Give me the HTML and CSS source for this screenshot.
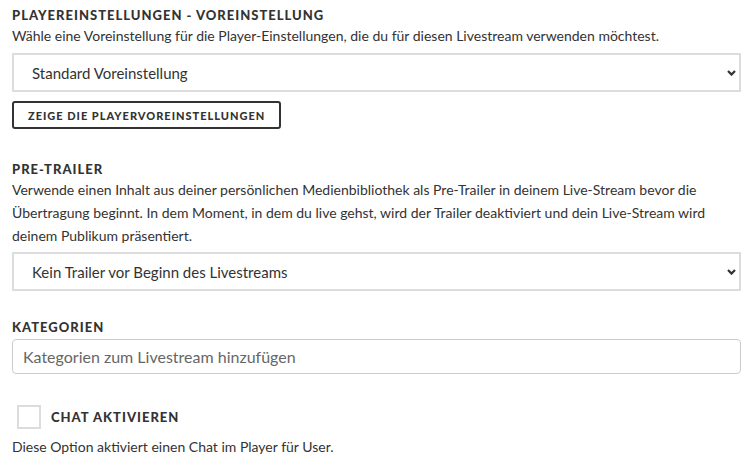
FILE: index.html
```html
<!DOCTYPE html>
<html lang="de">
<head>
    <meta charset="UTF-8">
    <meta name="viewport" content="width=device-width, initial-scale=1.0">
    <title>Livestream Einstellungen</title>
    <link rel="stylesheet" href="styles.css">
</head>
<body>
    <form class="settings">
        <section class="field field-preset">
            <h3 class="field-title">Playereinstellungen - Voreinstellung</h3>
            <p class="field-help">Wähle eine Voreinstellung für die Player-Einstellungen, die du für diesen Livestream verwenden möchtest.</p>
            <div class="select-wrap">
                <select class="select" name="preset">
                    <option>Standard Voreinstellung</option>
                </select>
                <svg class="select-arrow" width="9" height="6" viewBox="0 0 9 6"><path d="M1 1 L4.5 4.6 L8 1" fill="none" stroke="#333" stroke-width="2.2"/></svg>
            </div>
            <button type="button" class="btn-outline">Zeige die Playervoreinstellungen</button>
        </section>

        <section class="field field-trailer">
            <h3 class="field-title">Pre-Trailer</h3>
            <p class="field-help">Verwende einen Inhalt aus deiner persönlichen Medienbibliothek als Pre-Trailer in deinem Live-Stream bevor die Übertragung beginnt. In dem Moment, in dem du live gehst, wird der Trailer deaktiviert und dein Live-Stream wird deinem Publikum präsentiert.</p>
            <div class="select-wrap">
                <select class="select" name="trailer">
                    <option>Kein Trailer vor Beginn des Livestreams</option>
                </select>
                <svg class="select-arrow" width="9" height="6" viewBox="0 0 9 6"><path d="M1 1 L4.5 4.6 L8 1" fill="none" stroke="#333" stroke-width="2.2"/></svg>
            </div>
        </section>

        <section class="field field-categories">
            <h3 class="field-title">Kategorien</h3>
            <input class="text-input" type="text" placeholder="Kategorien zum Livestream hinzufügen">
        </section>

        <section class="field field-check">
            <label class="check">
                <input type="checkbox" name="chat">
                <span class="check-box"></span>
                <span class="check-label">Chat aktivieren</span>
            </label>
            <p class="field-help">Diese Option aktiviert einen Chat im Player für User.</p>
        </section>
    </form>
</body>
</html>
```

FILE: styles.css
```css
body {
    font-family: Lato, 'Open Sans', sans-serif;
    margin: 0;
    padding: 0 8px 0 12px;
    background: #fff;
    color: #333;
}

.settings {
    padding-top: 7px;
}

.field-preset {
    margin-bottom: 32px;
}

.field-trailer {
    margin-bottom: 28px;
}

.field-categories {
    margin-bottom: 31px;
}

.field-title {
    margin: 0;
    font-size: 13px;
    font-weight: 900;
    letter-spacing: 1px;
    text-transform: uppercase;
    line-height: 17px;
    color: #333;
}

.field-help {
    margin: 0 0 5px;
    font-size: 14px;
    line-height: 23px;
    color: #333;
}

.field-preset .field-help {
    margin-bottom: 6px;
}

.select-wrap {
    position: relative;
}

.select {
    display: block;
    width: 100%;
    height: 39px;
    padding: 0 18px;
    border: 2px solid #dcdcdc;
    border-radius: 0;
    background: #fff;
    font-family: inherit;
    font-size: 15px;
    color: #333;
    appearance: none;
    -webkit-appearance: none;
}

.select-arrow {
    position: absolute;
    right: 5px;
    top: 17px;
    pointer-events: none;
}

.btn-outline {
    display: block;
    margin-top: 9px;
    height: 28px;
    padding: 0 14px;
    background: #fff;
    border: 2px solid #333;
    border-radius: 3px;
    font-family: inherit;
    font-size: 11px;
    font-weight: 900;
    letter-spacing: 1px;
    text-transform: uppercase;
    color: #333;
}

.field .text-input {
    display: block;
    box-sizing: border-box;
    width: 100%;
    height: 35px;
    margin-top: 3px;
    padding: 0 10px;
    border: 1px solid #ccc;
    border-radius: 4px;
    font-family: inherit;
    font-size: 16px;
    color: #333;
}

.text-input::placeholder {
    color: #666;
}

.check {
    display: flex;
    align-items: center;
    gap: 10px;
    padding-left: 5px;
}

.check input {
    display: none;
}

.check-box {
    box-sizing: border-box;
    width: 24px;
    height: 24px;
    border: 2px solid #dcdcdc;
    background: #fff;
}

.check-label {
    font-size: 13px;
    font-weight: 900;
    letter-spacing: 1px;
    text-transform: uppercase;
}

.field-check .field-help {
    margin-top: 6px;
}
```
